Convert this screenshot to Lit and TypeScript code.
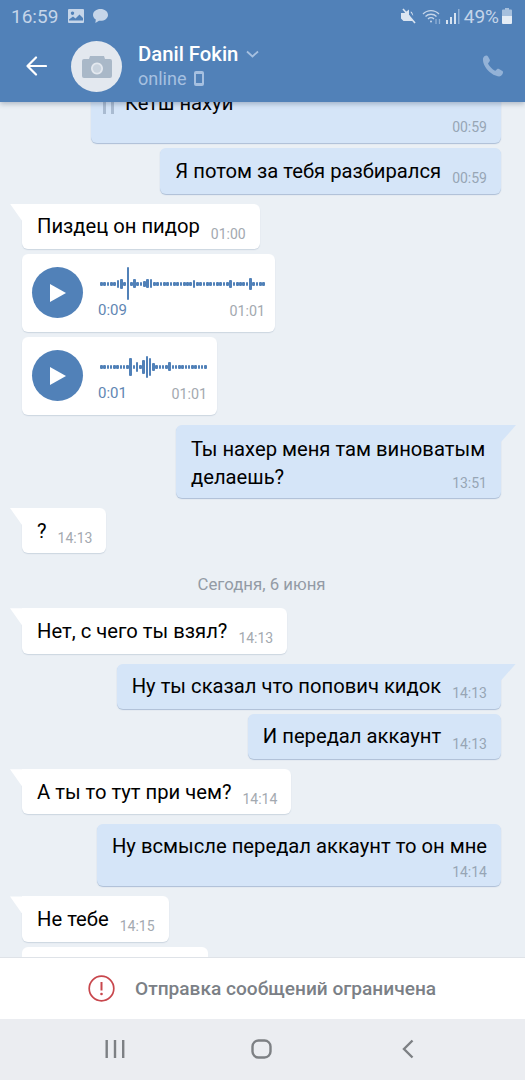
import { LitElement, html, css } from "lit";
import { customElement } from "lit/decorators.js";

type Msg =
  | { kind: "text"; out: boolean; text: string; time: string; tail?: boolean; stacked?: boolean; lastLine?: string }
  | { kind: "quote"; text: string; time: string }
  | { kind: "audio"; pos: string; time: string; width: number; bars: number[] }
  | { kind: "date"; text: string }
  | { kind: "stub" };

function bars(n: number, spec: Record<number, number>): number[] {
  return Array.from({ length: n }, (_, i) => spec[i] ?? 4);
}

const MESSAGES: Msg[] = [
  { kind: "quote", text: "Кетш нахуй", time: "00:59" },
  { kind: "text", out: true, text: "Я потом за тебя разбирался", time: "00:59" },
  { kind: "text", out: false, text: "Пиздец он пидор", time: "01:00", tail: true },
  { kind: "audio", pos: "0:09", time: "01:01", width: 165, bars: bars(50, { 5: 8, 6: 10, 8: 33, 10: 9, 13: 6, 14: 9, 15: 9, 28: 8, 39: 8, 45: 12 }) },
  { kind: "audio", pos: "0:01", time: "01:01", width: 107, bars: bars(33, { 9: 18, 11: 10, 13: 14, 14: 22, 15: 18, 16: 8, 21: 9 }) },
  { kind: "text", out: true, text: "Ты нахер меня там виноватым", lastLine: "делаешь?", time: "13:51", tail: true },
  { kind: "text", out: false, text: "?", time: "14:13", tail: true },
  { kind: "date", text: "Сегодня, 6 июня" },
  { kind: "text", out: false, text: "Нет, с чего ты взял?", time: "14:13", tail: true },
  { kind: "text", out: true, text: "Ну ты сказал что попович кидок", time: "14:13", tail: true },
  { kind: "text", out: true, text: "И передал аккаунт", time: "14:13" },
  { kind: "text", out: false, text: "А ты то тут при чем?", time: "14:14", tail: true },
  { kind: "text", out: true, text: "Ну всмысле передал аккаунт то он мне", time: "14:14", stacked: true },
  { kind: "text", out: false, text: "Не тебе", time: "14:15", tail: true },
  { kind: "stub" },
];

@customElement("app-root")
export class AppRoot extends LitElement {
  static styles = css`
    :host {
      display: flex;
      flex-direction: column;
      width: 525px;
      height: 1080px;
      overflow: hidden;
      font-family: Roboto, "Noto Sans", sans-serif;
      background: #ebf0f5;
      color: #000;
    }
    .header {
      height: 102px;
      flex: none;
      background: #5181b8;
      box-shadow: 0 2px 5px rgba(40, 60, 90, 0.3);
      position: relative;
      z-index: 2;
      display: flex;
      flex-direction: column;
    }
    .status {
      height: 32px;
      display: flex;
      align-items: center;
      padding: 0 13px 0 11px;
      color: #c5d5e9;
      font-size: 19px;
    }
    .status .clock { margin-right: 10px; }
    .status .img { margin-right: 9px; }
    .spacer { flex: 1; }
    .status .mute { margin-right: 5px; }
    .status .wifi { margin-right: 4px; }
    .status .signal { margin-right: 4px; }
    .status .battery { margin-left: 3px; }
    .bar {
      flex: 1;
      display: flex;
      align-items: flex-start;
      padding-left: 26px;
      padding-right: 21px;
    }
    .back { margin-top: 24px; margin-right: 24px; }
    .avatar {
      width: 51px;
      height: 51px;
      margin-top: 9px;
      border-radius: 50%;
      background: #e3e8ef;
      display: flex;
      align-items: center;
      justify-content: center;
      margin-right: 16px;
    }
    .who { display: flex; flex-direction: column; padding-top: 9px; }
    .name {
      display: flex;
      align-items: center;
      gap: 8px;
      color: #fff;
      font-size: 20.3px;
      font-weight: 500;
      line-height: 26px;
    }
    .online {
      display: flex;
      align-items: center;
      gap: 8px;
      color: #a6c0e0;
      font-size: 18px;
      line-height: 23px;
    }
    .phone { margin-top: 23px; }

    .list {
      flex: 1;
      min-height: 0;
      overflow: hidden;
      display: flex;
      flex-direction: column;
      padding: 0 24px 0 22px;
    }
    .msg {
      position: relative;
      display: flex;
      align-items: flex-end;
      flex: none;
      box-sizing: border-box;
      border-radius: 6px;
      padding: 9.5px 14px 8.5px 15px;
      margin-top: 10px;
      max-width: 420px;
      font-size: 20.22px;
      line-height: 27.3px;
    }
    .in {
      align-self: flex-start;
      background: #fff;
      box-shadow: 0 1px 1px rgba(150, 165, 185, 0.35);
    }
    .out {
      align-self: flex-end;
      background: #d5e5f8;
      box-shadow: 0 1px 1px rgba(120, 150, 190, 0.55);
    }
    .close { margin-top: 5px; }
    .tail::before {
      content: "";
      position: absolute;
      top: 0;
      width: 16px;
      height: 17px;
    }
    .in.tail { border-top-left-radius: 0; }
    .in.tail::before {
      left: -12px;
      background: #fff;
      clip-path: polygon(0 0, 100% 0, 100% 100%, 12px 100%);
    }
    .out.tail { border-top-right-radius: 0; }
    .out.tail::before {
      right: -15px;
      background: #d5e5f8;
      clip-path: polygon(0 0, 100% 0, 1px 100%, 0 100%);
    }
    .time {
      flex: none;
      font-size: 14px;
      line-height: 16px;
      color: #a3a9b0;
      margin-left: 11px;
      margin-bottom: -1px;
    }
    .out .time { color: #97a5b5; }
    .stacked {
      flex-direction: column;
      align-items: stretch;
      padding-top: 9px;
      padding-bottom: 6.7px;
    }
    .stacked .time { align-self: flex-end; margin: 3px 0 0; }
    .two { padding-top: 10px; padding-bottom: 7px; line-height: 28px; width: 325px; }
    .lastline { display: flex; justify-content: space-between; align-items: flex-end; }
    .two .time { margin: 0; }
    .quote {
      width: 410px;
      margin-top: -30px;
      padding: 18.2px 14px 8px 12px;
    }
    .quote .time { margin-top: 2px; }
    .qrow { display: flex; }
    .qbars {
      width: 5px;
      height: 24px;
      border-left: 3px solid #a9bbd1;
      border-right: 3px solid #a9bbd1;
      margin-right: 11px;
    }
    .audio {
      align-items: flex-start;
      padding: 13px 10px 0;
      height: 78px;
      gap: 16px;
    }
    .play {
      width: 51px;
      height: 51px;
      flex: none;
      border-radius: 50%;
      background: #5181b8;
      display: flex;
      align-items: center;
      justify-content: center;
    }
    .acol { display: flex; flex-direction: column; }
    .wave {
      display: flex;
      align-items: center;
      justify-content: space-between;
      height: 33px;
      margin-left: 1px;
    }
    .wave span {
      width: 2.7px;
      border-radius: 1px;
      background: #5181b8;
      flex: none;
    }
    .ameta {
      display: flex;
      justify-content: space-between;
      align-items: center;
      height: 20px;
      margin: 1px 0 0 -1px;
    }
    .pos { font-size: 15px; color: #5f86b3; }
    .ameta .time { font-size: 14.3px; margin: 0; line-height: 20px; }
    .date {
      flex: none;
      text-align: center;
      font-size: 16.8px;
      line-height: 20px;
      color: #939ba5;
      margin: 20.9px 0 4px;
    }
    .stub {
      width: 186px;
      height: 30px;
      flex: none;
      align-self: flex-start;
      background: #fff;
      border-radius: 6px;
      margin-top: 5px;
    }
    .footer {
      height: 62px;
      flex: none;
      box-sizing: border-box;
      background: #fff;
      border-top: 1px solid #dfe3e8;
      display: flex;
      align-items: center;
      padding-left: 88px;
      gap: 20px;
      position: relative;
      z-index: 1;
      font-size: 19.1px;
      font-weight: 500;
      color: #7b8086;
    }
    .nav {
      height: 61px;
      flex: none;
      background: #ebedf1;
      display: grid;
      grid-template-columns: 105px 20px 126px 21px 130px 12px;
      align-items: center;
      padding-bottom: 1px;
      box-sizing: border-box;
    }
    svg { display: block; flex: none; }
  `;

  private renderMsg(m: Msg, i: number, list: Msg[]) {
    if (m.kind === "date") return html`<div class="date">${m.text}</div>`;
    if (m.kind === "stub") return html`<div class="stub"></div>`;
    if (m.kind === "quote")
      return html`<div class="msg out stacked quote">
        <div class="qrow"><div class="qbars"></div><div>${m.text}</div></div>
        <div class="time">${m.time}</div>
      </div>`;
    if (m.kind === "audio")
      return html`<div class="msg in audio close">
        <div class="play">
          <svg width="18" height="20" viewBox="0 0 18 20"><path d="M1 1 L17 10 L1 19 Z" fill="#fff"/></svg>
        </div>
        <div class="acol">
          <div class="wave" style="width:${m.width}px">
            ${m.bars.map((h) => html`<span style="height:${h}px"></span>`)}
          </div>
          <div class="ameta"><span class="pos">${m.pos}</span><span class="time">${m.time}</span></div>
        </div>
      </div>`;
    const prev = list[i - 1];
    const close = !m.tail && prev.kind !== "date" && (prev.kind === "quote" || (prev.kind === "text" && prev.out === m.out));
    const cls = ["msg", m.out ? "out" : "in", m.tail ? "tail" : "", close ? "close" : "", m.stacked || m.lastLine ? "stacked" : "", m.lastLine ? "two" : ""].join(" ");
    if (m.lastLine)
      return html`<div class=${cls}>
        <div>${m.text}</div>
        <div class="lastline"><span>${m.lastLine}</span><span class="time">${m.time}</span></div>
      </div>`;
    return html`<div class=${cls}><div>${m.text}</div><div class="time">${m.time}</div></div>`;
  }

  render() {
    return html`
      <div class="header">
        <div class="status">
          <span class="clock">16:59</span>
          <svg class="img" width="16" height="14" viewBox="0 0 16 14">
            <path fill="#c5d5e9" fill-rule="evenodd" d="M1 0h14a1 1 0 0 1 1 1v12a1 1 0 0 1-1 1H1a1 1 0 0 1-1-1V1a1 1 0 0 1 1-1Zm0 11.5h14V9l-3.5-3.5-4 4L5 7.5 1 10.5ZM4.5 2.5a1.7 1.7 0 1 0 .01 0Z"/>
          </svg>
          <svg width="15" height="14" viewBox="0 0 15 14">
            <path fill="#c5d5e9" d="M7.5 0C3.4 0 0 2.6 0 5.9c0 1.9 1.1 3.5 2.8 4.6L2.4 14l3.6-2.3c.5.1 1 .1 1.5.1 4.1 0 7.5-2.6 7.5-5.9S11.6 0 7.5 0Z"/>
          </svg>
          <span class="spacer"></span>
          <svg class="mute" width="16" height="16" viewBox="0 0 16 16">
            <path fill="#dbe5f1" d="M0 5h3.5L8 1.5V7L12 13H2.5L0 10.5Z M10 3.5c1.5 1 2 2.5 2.2 4.5L9.5 4Z"/>
            <path stroke="#dbe5f1" stroke-width="1.6" d="M2 1 L14 15"/>
          </svg>
          <svg class="wifi" width="20" height="17" viewBox="0 0 20 17" fill="none" stroke="#c5d5e9" stroke-width="1.3">
            <path d="M1 6c4.5-4.5 11.5-4.5 16 0"/>
            <path d="M3.5 8.5c3-3 8-3 11 0"/>
            <path d="M6 11c1.7-1.7 4.3-1.7 6 0"/>
            <circle cx="9" cy="13.5" r="1" fill="#c5d5e9" stroke="none"/>
            <path d="M14 11v5M17.5 11v5" stroke="#8fb0d6"/>
          </svg>
          <svg class="signal" width="14" height="17" viewBox="0 0 14 17">
            <rect x="0" y="12" width="2" height="4" fill="#d6e2f0"/>
            <rect x="4" y="9" width="2" height="7" fill="#d6e2f0"/>
            <rect x="8" y="5" width="2" height="11" fill="#d6e2f0"/>
            <rect x="12" y="1" width="1.5" height="15" fill="#8fb0d6"/>
          </svg>
          <span>49%</span>
          <svg class="battery" width="10" height="16" viewBox="0 0 10 16">
            <path fill="#a5bfdd" d="M3 0h4v1.5h2a1 1 0 0 1 1 1V8H0V2.5a1 1 0 0 1 1-1h2Z"/>
            <path fill="#e4ecf5" d="M0 8h10v7a1 1 0 0 1-1 1H1a1 1 0 0 1-1-1Z"/>
          </svg>
        </div>
        <div class="bar">
          <svg class="back" width="21" height="20" viewBox="0 0 21 20" fill="none" stroke="#fff" stroke-width="2.2" stroke-linecap="round" stroke-linejoin="round">
            <path d="M1.5 10H20M10 1.5 1.5 10l8.5 8.5"/>
          </svg>
          <div class="avatar">
            <svg width="30" height="22" viewBox="0 0 30 22">
              <path fill="#a9b8c8" fill-rule="evenodd" d="M2 3h5l1-3h14l1 3h5a2 2 0 0 1 2 2v15a2 2 0 0 1-2 2H2a2 2 0 0 1-2-2V5a2 2 0 0 1 2-2Zm13 3.5a6 6 0 1 0 .01 0Z"/>
              <circle cx="15" cy="12.5" r="4.2" fill="#c9d3de"/>
            </svg>
          </div>
          <div class="who">
            <div class="name">Danil Fokin
              <svg width="13" height="8" viewBox="0 0 13 8" fill="none" stroke="#a6c0e0" stroke-width="1.8"><path d="M1 1.5l5.5 5 5.5-5"/></svg>
            </div>
            <div class="online">online
              <svg width="10" height="15" viewBox="0 0 10 15"><path fill="#a6c0e0" fill-rule="evenodd" d="M2 0h6a2 2 0 0 1 2 2v11a2 2 0 0 1-2 2H2a2 2 0 0 1-2-2V2a2 2 0 0 1 2-2Zm0 3v9h6V3Z"/></svg>
            </div>
          </div>
          <span class="spacer"></span>
          <svg class="phone" width="22" height="22" viewBox="0 0 22 22">
            <path fill="#93b2d7" d="M1 3.5C1.500 1.800 3 .5 4.300.5c.8 0 1.300.4 1.700 1.100l1.700 3c.4.700.3 1.400-.2 2L6.300 7.900c-.3.400-.3.800-.1 1.200 1.300 2.500 3.800 5 6.300 6.400.4.200.8.200 1.200-.1l1.300-1.200c.6-.5 1.300-.6 2-.2l3 1.700c.8.400 1.100 1 1 1.800-.1 1.500-1.600 3.700-3.800 3.900C10 21 .2 12 1 3.500Z"/>
          </svg>
        </div>
      </div>
      <div class="list">
        ${MESSAGES.map((m, i) => this.renderMsg(m, i, MESSAGES))}
      </div>
      <div class="footer">
        <svg width="27" height="27" viewBox="0 0 27 27" fill="none">
          <circle cx="13.5" cy="13.5" r="12.3" stroke="#c8474d" stroke-width="1.7"/>
          <path d="M13.5 7v8.5" stroke="#c8474d" stroke-width="2"/>
          <circle cx="13.5" cy="19" r="1.3" fill="#c8474d"/>
        </svg>
        <span>Отправка сообщений ограничена</span>
      </div>
      <div class="nav">
        <span></span>
        <svg width="20" height="20" viewBox="0 0 20 20" fill="#7d8084"><rect x="0.5" y="1" width="2.4" height="18"/><rect x="8.8" y="1" width="2.4" height="18"/><rect x="17" y="1" width="2.4" height="18"/></svg>
        <span></span>
        <svg width="21" height="20" viewBox="0 0 21 20" fill="none" stroke="#7d8084" stroke-width="2.4"><rect x="1.5" y="1.5" width="18" height="17" rx="6"/></svg>
        <span></span>
        <svg width="12" height="20" viewBox="0 0 12 20" fill="none" stroke="#7d8084" stroke-width="2.4"><path d="M10.5 1.5 2 10l8.5 8.5"/></svg>
      </div>
    `;
  }
}
